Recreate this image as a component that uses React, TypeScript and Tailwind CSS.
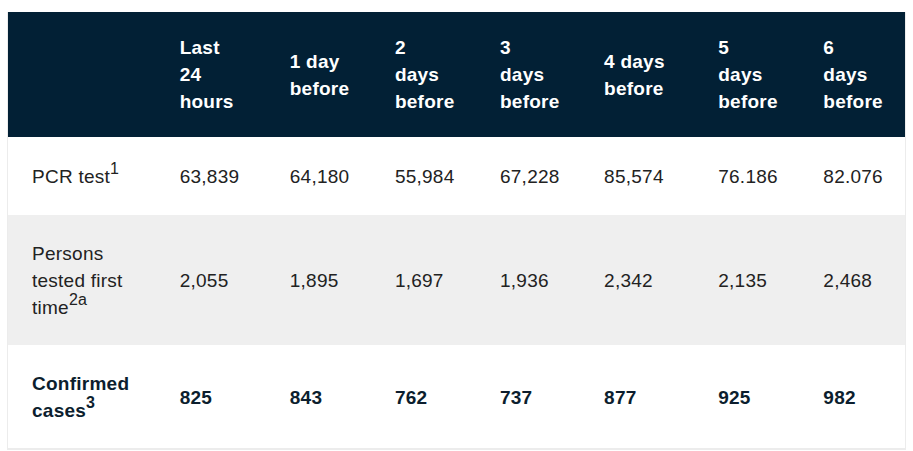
const columns = ['Last 24 hours', '1 day before', '2 days before', '3 days before', '4 days before', '5 days before', '6 days before'];

const colWidths = ['w-[148px]', 'w-[110px]', 'w-[105px]', 'w-[105px]', 'w-[104px]', 'w-[114px]', 'w-[105px]', 'w-[106px]'];

interface Row {
  label: string;
  sup: string;
  values: string[];
  bold?: boolean;
  shaded?: boolean;
  tall?: boolean;
}

const rows: Row[] = [
  {
    label: 'PCR test',
    sup: '1',
    values: ['63,839', '64,180', '55,984', '67,228', '85,574', '76.186', '82.076'],
    tall: true,
  },
  {
    label: 'Persons tested first time',
    sup: '2a',
    values: ['2,055', '1,895', '1,697', '1,936', '2,342', '2,135', '2,468'],
    shaded: true,
  },
  {
    label: 'Confirmed cases',
    sup: '3',
    values: ['825', '843', '762', '737', '877', '925', '982'],
    bold: true,
  },
];

export default function App() {
  return (
    <div className="min-h-screen bg-white pt-3 pl-[7px] font-['Liberation_Sans',Arial,sans-serif] text-[19px] leading-[27px] tracking-[0.25px]">
      <table className="table-fixed border-collapse w-[899px] border-x border-b-2 border-[#ececec]">
        <colgroup>
          {colWidths.map((w, i) => (
            <col key={i} className={w} />
          ))}
        </colgroup>
        <thead>
          <tr className="bg-[#022035] text-white">
            <th className="py-[22px] pl-6 pr-6" />
            {columns.map((c) => (
              <th key={c} className="py-[22px] pl-6 pr-6 text-left align-middle font-bold">
                {c}
              </th>
            ))}
          </tr>
        </thead>
        <tbody>
          {rows.map((row) => {
            const cell = `${row.tall ? 'pt-[26px] pb-[25px]' : 'pt-[25px] pb-[24px]'} pl-6 pr-6 align-middle ${
              row.bold ? 'font-bold text-[#0c1e2e]' : 'text-[#222222]'
            }`;
            return (
              <tr key={row.label} className={row.shaded ? 'bg-[#efefef]' : 'bg-white'}>
                <td className={cell}>
                  {row.label}
                  <sup className="text-[16px] top-[-0.55em]">{row.sup}</sup>
                </td>
                {row.values.map((v, i) => (
                  <td key={i} className={cell}>
                    {v}
                  </td>
                ))}
              </tr>
            );
          })}
        </tbody>
      </table>
    </div>
  );
}
